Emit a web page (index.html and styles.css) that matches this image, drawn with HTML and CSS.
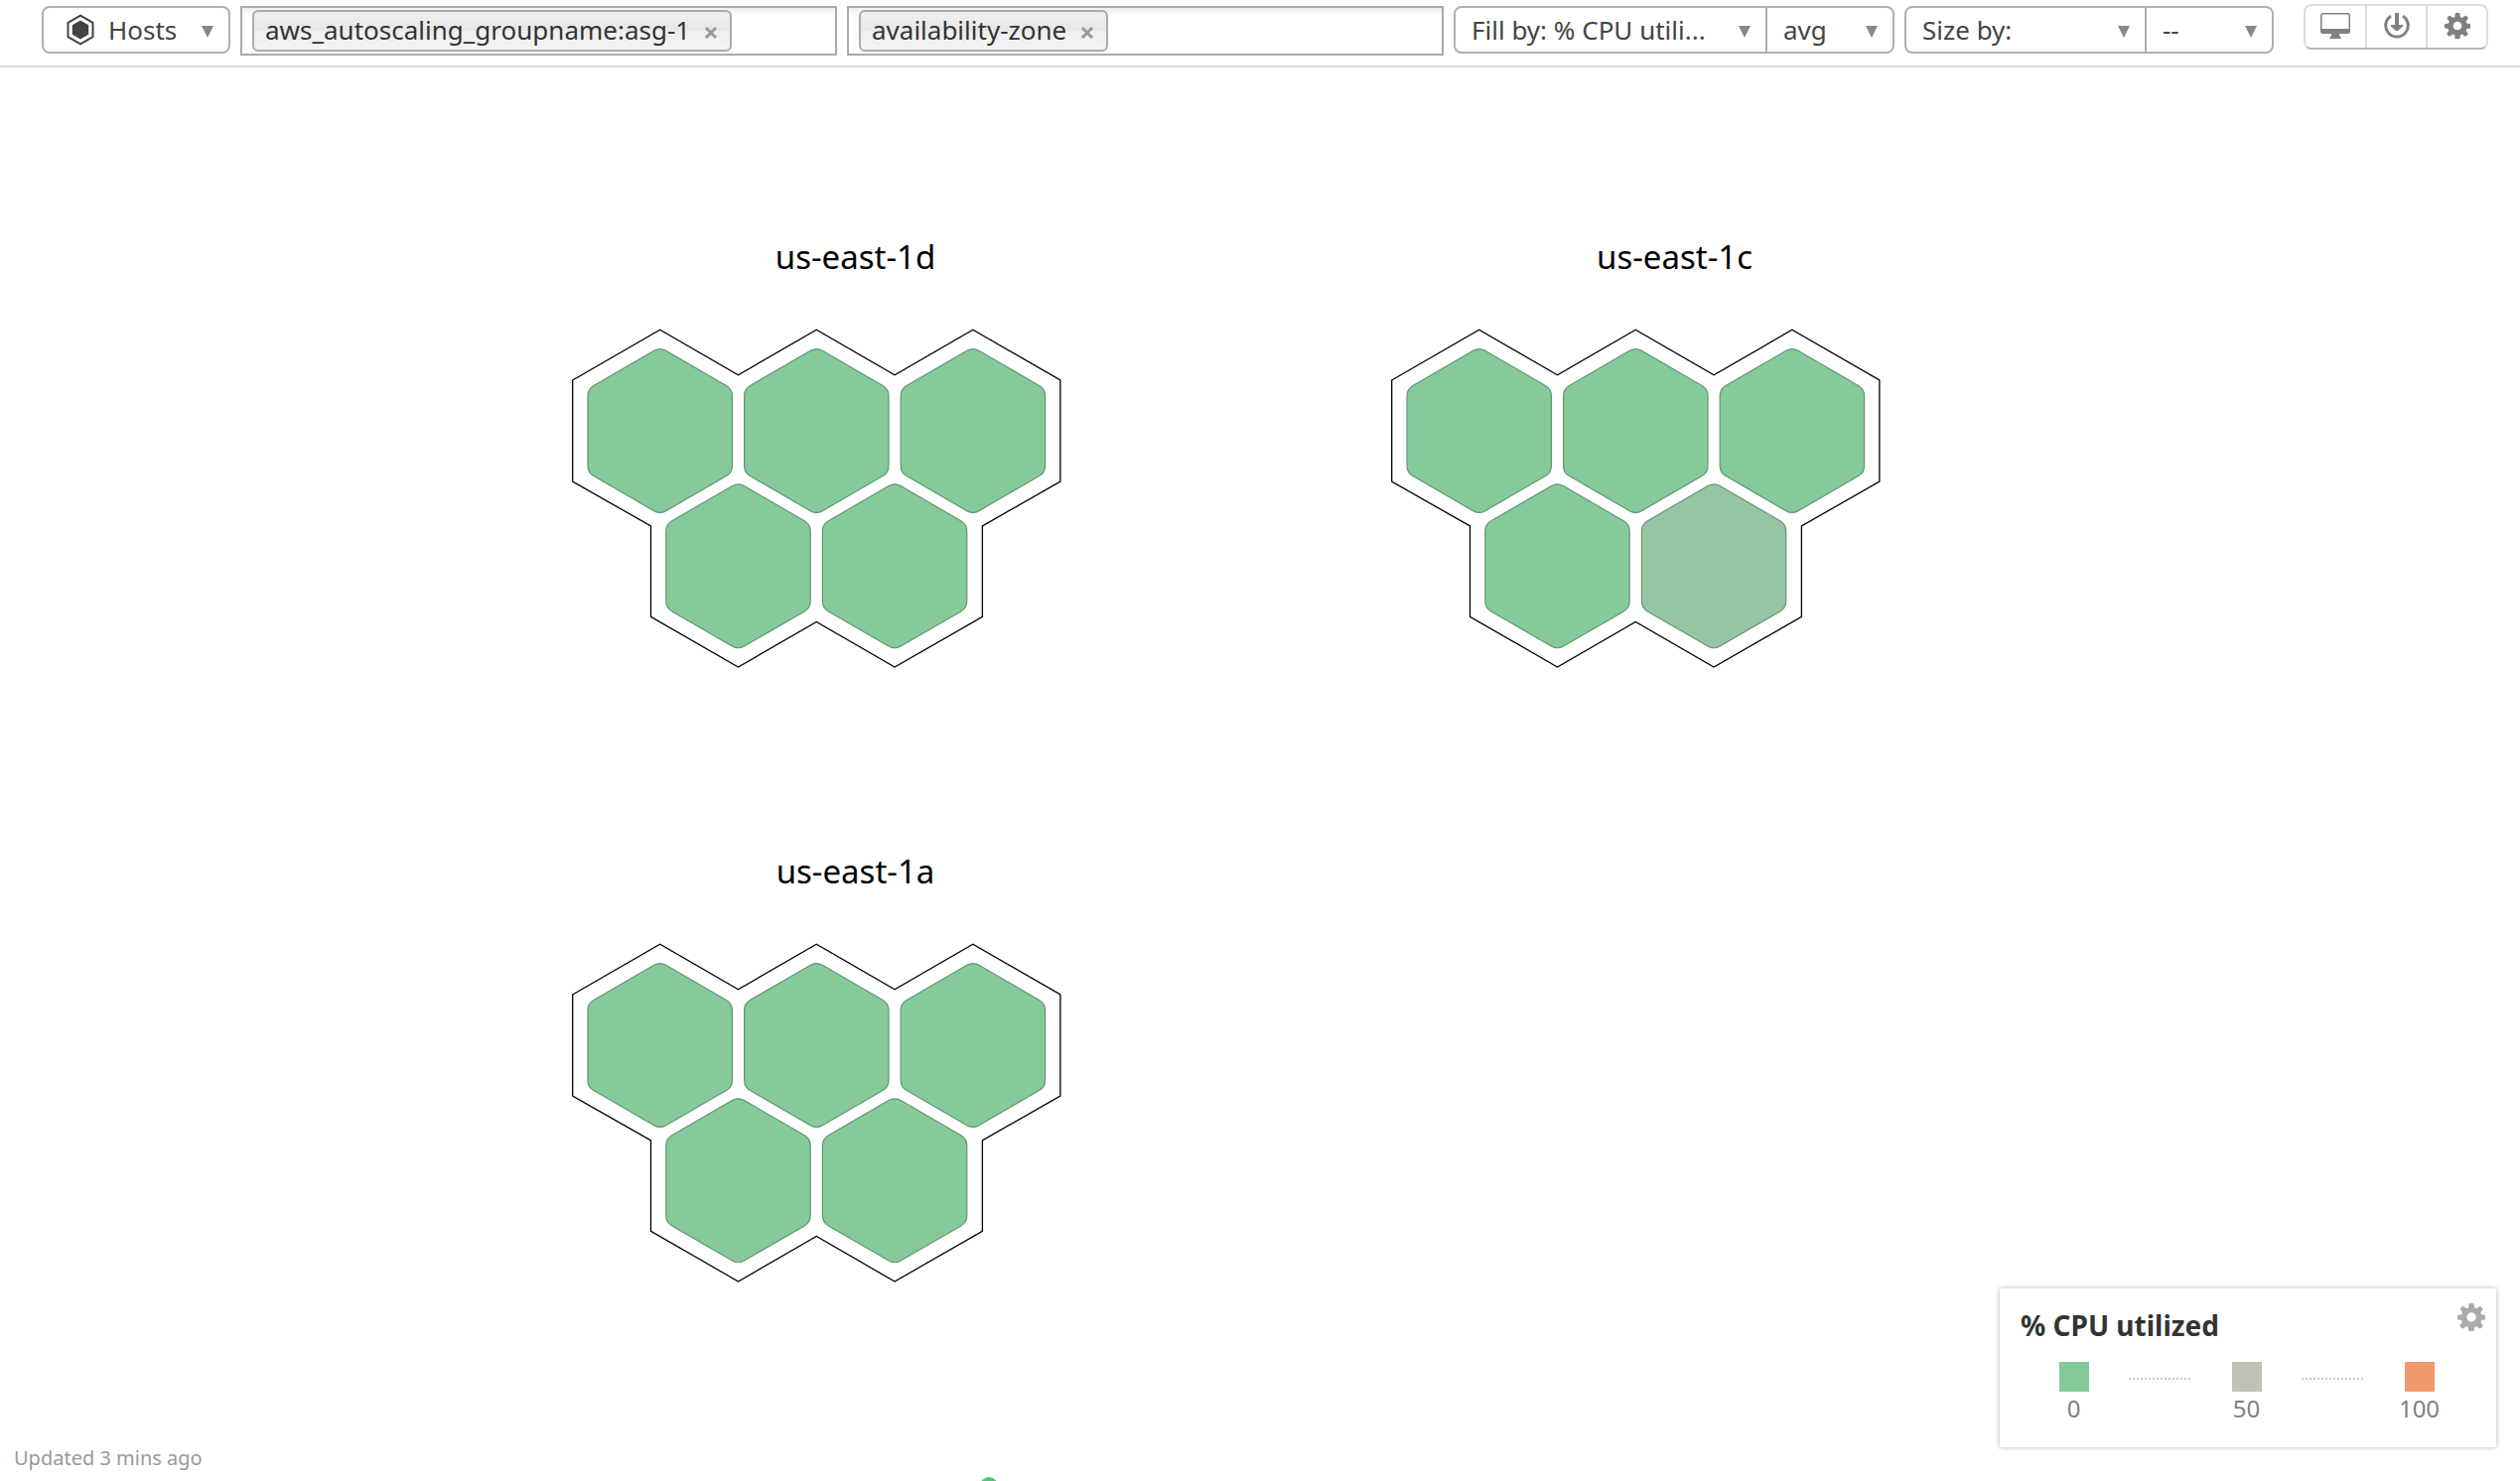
FILE: index.html
```
<!DOCTYPE html>
<html lang="en">
<head>
    <meta charset="utf-8"/>
    <title>Host Map</title>
    <link rel="stylesheet" href="styles.css">
</head>
<body>
<!-- shared shapes -->
<svg class="defs" aria-hidden="true">
    <symbol id="gear" viewBox="0 0 28 28">
        <path fill="currentColor" fill-rule="evenodd" d="M11.4 1Q11.6 0 12.6 0h2.8q1 0 1.2 1l.6 3.5 2 .8 2.9-2.1q.8-.6 1.5.1l1.6 1.6q.7.7.1 1.5l-2 2.9.8 2 3.3.5q1 .2 1 1.2v2.4q0 1-1 1.2l-3.3.5-.8 2 2 2.9q.6.8-.1 1.5l-1.6 1.6q-.7.7-1.5.1l-2.9-2-2 .8-.6 3.5q-.2 1-1.2 1h-2.8q-1 0-1.2-1l-.6-3.5-2-.8-2.9 2q-.8.6-1.5-.1l-1.6-1.6q-.7-.7-.1-1.5l2-2.9-.8-2L1 16.600Q0 16.400 0 15.400V13q0-1 1-1.200l3.300-.5.800-2-2-2.900q-.6-.8.100-1.500l1.600-1.600q.7-.7 1.500-.1l2.900 2.100 2-.8zM14 9.300a4.700 4.700 0 1 0 0 9.400 4.700 4.700 0 0 0 0-9.400z"/>
    </symbol>
    <symbol id="hex" viewBox="-74 -85 148 170">
        <path d="M-6-80.7Q0-84.200 6-80.700L66.700-45.600Q72.700-42.100 72.700-35.200V35.200Q72.700 42.100 66.700 45.600L6 80.700Q0 84.200-6 80.700L-66.700 45.600Q-72.700 42.100-72.700 35.200V-35.200Q-72.700-42.100-66.700-45.600Z"/>
    </symbol>
    <symbol id="outline" viewBox="0 0 494 343">
        <path d="M.7 52L88.700 1.300 167.500 46.700 246.300 1.300 325.100 46.700 403.900 1.300 491.900 52V154L413.400 199V290.300L325.100 341 246.300 295.500 167.500 341 79.500 290.300V199L.7 154Z"/>
    </symbol>
</svg>

<header class="toolbar">
    <button type="button" class="hosts">
        <svg class="hosts-icon" viewBox="0 0 28 32" aria-hidden="true">
            <path fill="none" stroke="#444" stroke-width="2" d="M14 1.600L26.500 8.800V23.200L14 30.400 1.500 23.200V8.800Z"/>
            <path fill="#444" d="M14 6.500L22.200 11.200V20.800L14 25.500 5.800 20.800V11.200Z"/>
        </svg>
        <span>Hosts</span>
        <i class="arrow"></i>
    </button>

    <div class="tagbox">
        <span class="tag">aws_autoscaling_groupname:asg-1<button type="button" class="remove" aria-label="Remove filter"><svg viewBox="0 0 14 14"><path d="M2 2L12 12M12 2L2 12"/></svg></button></span>
        <input type="text" aria-label="Filter by">
    </div>
    <div class="tagbox">
        <span class="tag">availability-zone<button type="button" class="remove" aria-label="Remove group"><svg viewBox="0 0 14 14"><path d="M2 2L12 12M12 2L2 12"/></svg></button></span>
        <input type="text" aria-label="Group by">
    </div>

    <div class="selects">
        <div class="pick pick-fill">
            <select aria-label="Fill by"><option>Fill by: % CPU utili...</option></select>
            <i class="arrow"></i>
        </div>
        <div class="pick pick-agg">
            <select aria-label="Fill aggregation"><option>avg</option></select>
            <i class="arrow"></i>
        </div>
    </div>
    <div class="selects">
        <div class="pick pick-size">
            <select aria-label="Size by"><option>Size by:</option></select>
            <i class="arrow"></i>
        </div>
        <div class="pick pick-agg">
            <select aria-label="Size aggregation"><option>--</option></select>
            <i class="arrow"></i>
        </div>
    </div>

    <div class="actions">
        <button type="button" aria-label="Full screen">
            <svg width="30" height="26" viewBox="0 0 30 26">
                <path fill="#808080" fill-rule="evenodd" d="M2.500 0h25Q30 0 30 2.500v16Q30 21 27.500 21H19v2l1.500 1.500V26h-11v-1.500L11 23v-2H2.500Q0 21 0 18.500v-16Q0 0 2.500 0zM2.500 1.500q-1 0-1 1V16h27V2.500q0-1-1-1z"/>
            </svg>
        </button>
        <button type="button" aria-label="Export">
            <svg width="26" height="26" viewBox="0 0 26 26">
                <path fill="none" stroke="#808080" stroke-width="3" d="M7 3.200A11.300 11.300 0 1 0 19 3.200"/>
                <path fill="#808080" d="M11 0h4v12h4v1.500L14 18h-2l-5-4.500V12h4z"/>
            </svg>
        </button>
        <button type="button" aria-label="Settings">
            <svg class="gear-dark" width="26" height="26"><use href="#gear"/></svg>
        </button>
    </div>
</header>

<main class="map">
    <section class="zone">
        <h2>us-east-1d</h2>
        <svg class="comb" viewBox="0 0 494 343">
            <use class="line" href="#outline" width="494" height="343"/>
            <use class="host" href="#hex" x="14.700" y="18" width="148" height="170"/>
            <use class="host" href="#hex" x="172.300" y="18" width="148" height="170"/>
            <use class="host" href="#hex" x="329.900" y="18" width="148" height="170"/>
            <use class="host" href="#hex" x="93.500" y="154.300" width="148" height="170"/>
            <use class="host" href="#hex" x="251.100" y="154.300" width="148" height="170"/>
        </svg>
    </section>
    <section class="zone">
        <h2>us-east-1c</h2>
        <svg class="comb" viewBox="0 0 494 343">
            <use class="line" href="#outline" width="494" height="343"/>
            <use class="host" href="#hex" x="14.700" y="18" width="148" height="170"/>
            <use class="host" href="#hex" x="172.300" y="18" width="148" height="170"/>
            <use class="host" href="#hex" x="329.900" y="18" width="148" height="170"/>
            <use class="host" href="#hex" x="93.500" y="154.300" width="148" height="170"/>
            <use class="host busy" href="#hex" x="251.100" y="154.300" width="148" height="170"/>
        </svg>
    </section>
    <section class="zone">
        <h2>us-east-1a</h2>
        <svg class="comb" viewBox="0 0 494 343">
            <use class="line" href="#outline" width="494" height="343"/>
            <use class="host" href="#hex" x="14.700" y="18" width="148" height="170"/>
            <use class="host" href="#hex" x="172.300" y="18" width="148" height="170"/>
            <use class="host" href="#hex" x="329.900" y="18" width="148" height="170"/>
            <use class="host" href="#hex" x="93.500" y="154.300" width="148" height="170"/>
            <use class="host" href="#hex" x="251.100" y="154.300" width="148" height="170"/>
        </svg>
    </section>
</main>

<aside class="legend">
    <div class="legend-head">
        <h3>% CPU utilized</h3>
        <button type="button" class="legend-gear" aria-label="Legend settings">
            <svg width="28" height="28"><use href="#gear"/></svg>
        </button>
    </div>
    <div class="scale">
        <div class="stop"><i class="swatch green"></i><span>0</span></div>
        <i class="dots"></i>
        <div class="stop"><i class="swatch gray"></i><span>50</span></div>
        <i class="dots"></i>
        <div class="stop"><i class="swatch orange"></i><span>100</span></div>
    </div>
</aside>

<footer class="updated">Updated 3 mins ago</footer>
<i class="status-dot"></i>
</body>
</html>
```
FILE: styles.css
```
* {
    box-sizing: border-box;
}

body {
    margin: 0;
    min-height: 100vh;
    position: relative;
    overflow: hidden;
    display: flex;
    flex-direction: column;
    background: #fff;
    color: #444;
    font-family: "Noto Sans", "Open Sans", sans-serif;
    font-size: 26px;
}

button, select, input {
    font: inherit;
    color: inherit;
    background: none;
    border: 0;
    margin: 0;
    padding: 0;
    outline: 0;
}

svg {
    display: block;
}

.defs {
    position: absolute;
    width: 0;
    height: 0;
}

/* toolbar */
.toolbar {
    display: flex;
    align-items: flex-start;
    gap: 10px;
    height: 68px;
    padding: 6px 32px 0 42px;
    border-bottom: 2px solid #dcdcdc;
}

.hosts {
    display: flex;
    align-items: center;
    width: 190px;
    height: 48px;
    padding: 0 15px 0 23px;
    border: 2px solid #b0b0b0;
    border-radius: 8px;
}

.hosts-icon {
    width: 28px;
    height: 32px;
    margin-right: 14px;
}

.arrow {
    width: 12px;
    height: 12px;
    margin-left: auto;
    background: #888;
    clip-path: polygon(0 0, 100% 0, 50% 100%);
    pointer-events: none;
}

.hosts .arrow {
    margin-top: 4px;
}

.tagbox {
    flex: 1;
    min-width: 0;
    display: flex;
    height: 50px;
    padding: 2px 10px;
    border: 2px solid #aaa;
    background: linear-gradient(#eee, #fff 8px);
}

.tagbox input {
    flex: 1;
    min-width: 0;
}

.tag {
    display: flex;
    align-items: center;
    height: 42px;
    padding: 0 12px 2px 11px;
    border: 2px solid #aaa;
    border-radius: 6px;
    background: linear-gradient(#f0f0f0, #e6e6e6 50%, #eee 51%, #f4f4f4);
    color: #333;
    white-space: nowrap;
}

.remove {
    margin: 6px 0 0 14px;
}

.remove svg {
    width: 14px;
    height: 14px;
    fill: none;
    stroke: #999;
    stroke-width: 3;
}

.selects {
    display: flex;
    height: 48px;
    border: 2px solid #b0b0b0;
    border-radius: 8px;
}

.pick {
    position: relative;
}

.pick + .pick {
    border-left: 2px solid #b0b0b0;
}

.pick select {
    width: 100%;
    height: 44px;
    padding-left: 16px;
    appearance: none;
}

.pick .arrow {
    position: absolute;
    right: 15px;
    top: 18px;
}

.pick-fill {
    width: 312px;
}

.pick-size {
    width: 240px;
}

.pick-agg {
    width: 128px;
}

.actions {
    display: flex;
    height: 46px;
    margin: -2px 0 0 20px;
    border: 2px solid #dcdcdc;
    border-bottom-color: #b8b8b8;
    border-radius: 8px;
}

.actions button {
    display: flex;
    justify-content: center;
    width: 60px;
    padding-top: 7px;
}

.actions button + button {
    width: 61px;
    border-left: 2px solid #dcdcdc;
}

.gear-dark {
    color: #808080;
}

/* host map */
.map {
    flex: 1;
    display: grid;
    grid-template-columns: 825px 825px;
    justify-content: center;
    align-content: start;
    row-gap: 180px;
    padding: 167px 0 0 10px;
}

.zone h2 {
    margin: 0 0 48px;
    color: #000;
    font-size: 33px;
    font-weight: normal;
    line-height: 48px;
    text-align: center;
}

.comb {
    width: 494px;
    height: 343px;
    margin-left: 127px;
}

.line {
    fill: none;
    stroke: #000;
    stroke-width: 1.3px;
}

.host {
    fill: #86c99a;
    stroke: #5f9672;
    stroke-width: 1.2px;
}

.host.busy {
    fill: #95c5a2;
    stroke: #6b9077;
}

/* legend */
.legend {
    position: absolute;
    right: 24px;
    bottom: 34px;
    width: 500px;
    height: 160px;
    padding: 15px 11px 0 21px;
    background: #fff;
    border-radius: 2px;
    box-shadow: 0 0 5px rgba(0, 0, 0, 0.3);
}

.legend-head {
    display: flex;
    justify-content: space-between;
    align-items: flex-start;
}

.legend h3 {
    margin: 0;
    color: #333;
    font-size: 28px;
    line-height: 44px;
}

.legend-gear {
    color: #aaa;
}

.scale {
    display: flex;
    justify-content: center;
    gap: 40px;
    margin: 15px 13px 0 0;
}

.stop {
    display: flex;
    flex-direction: column;
    align-items: center;
    width: 30px;
    color: #808080;
    font-size: 24px;
    line-height: 34px;
}

.swatch {
    width: 30px;
    height: 30px;
}

.green {
    background: #84c99a;
}

.gray {
    background: #c2c1b8;
}

.orange {
    background: #f0986e;
}

.dots {
    width: 64px;
    height: 2px;
    margin-top: 16px;
    background: repeating-linear-gradient(90deg, #ccc 0 2px, transparent 2px 4px);
}

.updated {
    padding: 0 14px 8px;
    color: #999;
    font-size: 20px;
    line-height: 30px;
}

.status-dot {
    position: absolute;
    left: 987px;
    bottom: -14px;
    width: 18px;
    height: 18px;
    border-radius: 50%;
    background: #54c571;
}
```
